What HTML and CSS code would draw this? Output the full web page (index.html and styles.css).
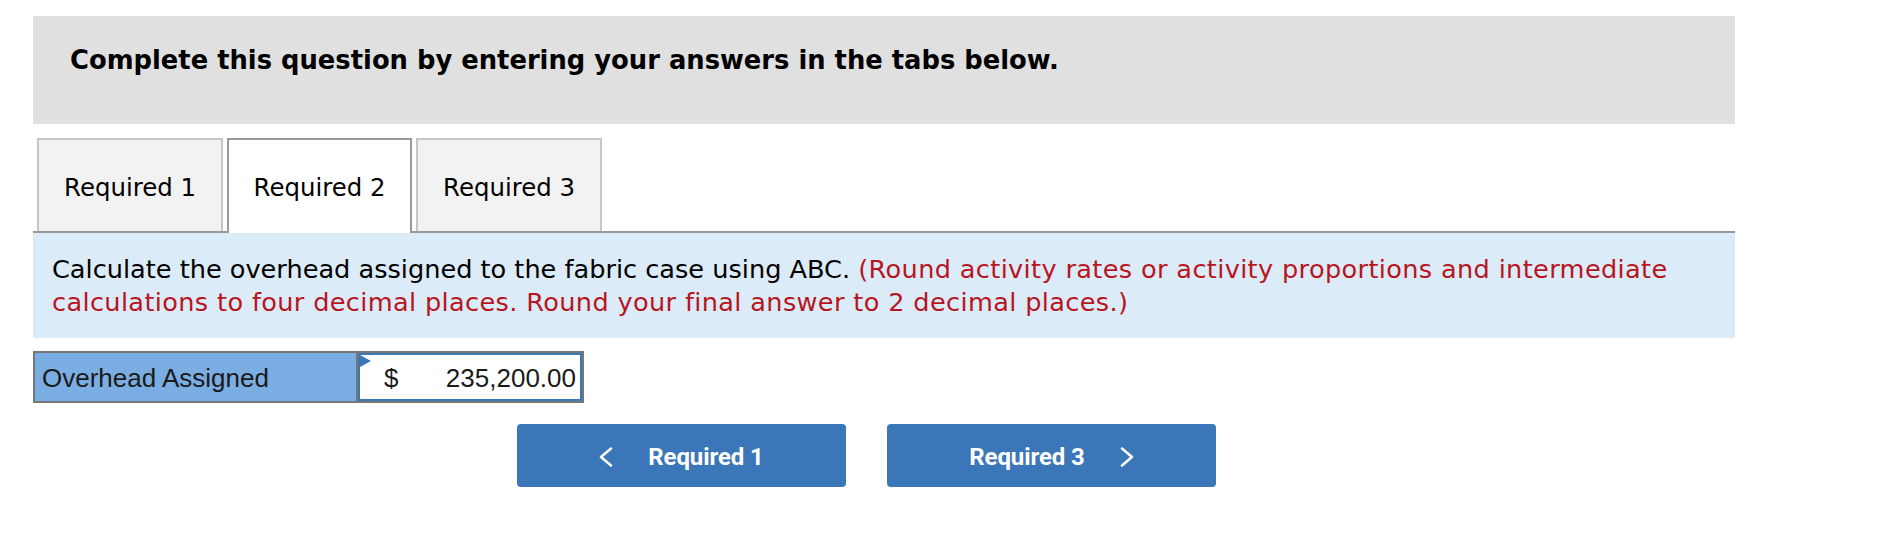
FILE: index.html
```html
<!DOCTYPE html>
<html>
<head>
<meta charset="utf-8">
<link rel="stylesheet" href="styles.css">
</head>
<body>
<div class="page">
  <div class="banner">
    <h1 class="banner-title">Complete this question by entering your answers in the tabs below.</h1>
  </div>
  <div class="tabs">
    <div class="tab">Required 1</div>
    <div class="tab tab-active">Required 2</div>
    <div class="tab">Required 3</div>
  </div>
  <div class="prompt">
    Calculate the overhead assigned to the fabric case using ABC. <span class="note">(Round activity rates or activity proportions and intermediate calculations to four decimal places. Round your final answer to 2 decimal places.)</span>
  </div>
  <div class="answer">
    <div class="answer-label">Overhead Assigned</div>
    <div class="answer-input">
      <span class="flag"></span>
      <span class="currency">$</span>
      <span class="amount">235,200.00</span>
    </div>
  </div>
  <div class="nav">
    <button class="nav-btn">
      <svg class="chev" width="14" height="20" viewBox="0 0 14 20"><polyline points="12,1.5 2,10 12,18.5" fill="none" stroke="#fff" stroke-width="2.5" stroke-linecap="round" stroke-linejoin="round"/></svg>
      <span>Required 1</span>
    </button>
    <button class="nav-btn">
      <span>Required 3</span>
      <svg class="chev" width="14" height="20" viewBox="0 0 14 20"><polyline points="2,1.5 12,10 2,18.5" fill="none" stroke="#fff" stroke-width="2.5" stroke-linecap="round" stroke-linejoin="round"/></svg>
    </button>
  </div>
</div>
</body>
</html>
```
FILE: styles.css
```css
* { box-sizing: border-box; }
body {
  margin: 0;
  background: #fff;
  font-family: "DejaVu Sans", Verdana, sans-serif;
  color: #000;
}
.page {
  width: 1735px;
  padding: 16px 0 0 33px;
}
.banner {
  background: #e0e0e0;
  height: 108px;
  padding: 29px 0 0 37px;
}
.banner-title {
  margin: 0;
  font-size: 25.8px;
  line-height: 30px;
  font-weight: bold;
}
.tabs {
  margin-top: 14px;
  display: flex;
  gap: 4px;
  padding-left: 4px;
  border-bottom: 2px solid #999;
  height: 95px;
}
.tab {
  width: 186px;
  height: 93px;
  background: #f2f2f2;
  border: 2px solid #c6c6c6;
  border-bottom: none;
  display: flex;
  align-items: center;
  justify-content: center;
  padding-top: 4px;
  font-size: 24.4px;
  color: #000;
}
.tab-active {
  width: 185px;
  height: 95px;
  background: #fff;
  border-color: #999;
  margin-bottom: -2px;
  padding-top: 2px;
}
.prompt {
  background: #dbebf7;
  height: 105px;
  padding: 20px 19px 0 19px;
  font-size: 25.6px;
  line-height: 33px;
}
.note {
  color: #b8151f;
  letter-spacing: 0.35px;
}
.answer {
  margin-top: 13px;
  display: flex;
  width: 551px;
  height: 52px;
  border: 2px solid #777;
  font-family: "Liberation Sans", Arial, sans-serif;
  font-size: 26px;
  color: #1a1a1a;
}
.answer-label {
  width: 323px;
  background: #7aade2;
  border-right: 2px solid #777;
  display: flex;
  align-items: center;
  padding-left: 7px;
  padding-top: 2px;
}
.answer-input {
  position: relative;
  flex: 1;
  border: 2px solid #3b76b8;
  background: #fff;
  display: flex;
  align-items: center;
  padding: 2px 4px 0 24px;
}
.flag {
  position: absolute;
  left: 0;
  top: 0;
  width: 0;
  height: 0;
  border-top: 6px solid transparent;
  border-bottom: 6px solid transparent;
  border-left: 11px solid #3b76b8;
}
.amount { margin-left: auto; }
.nav {
  margin-top: 21px;
  display: flex;
  gap: 41px;
  padding-left: 484px;
}
.nav-btn {
  width: 329px;
  height: 63px;
  background: #3b76b8;
  border: none;
  border-radius: 4px;
  color: #fff;
  font-family: Roboto, "Liberation Sans", sans-serif;
  font-weight: bold;
  font-size: 24px;
  letter-spacing: -0.1px;
  display: flex;
  align-items: center;
  justify-content: center;
  gap: 35px;
  padding: 2px 0 0 0;
}
.chev { display: block; }
```
